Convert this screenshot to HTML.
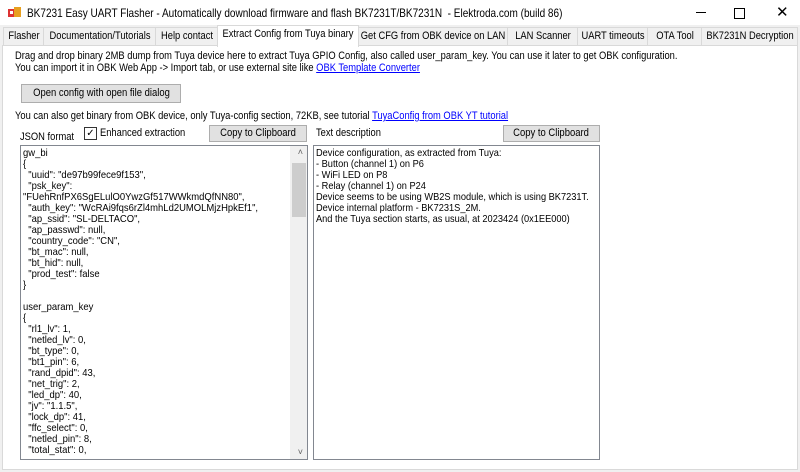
<!DOCTYPE html><html><head><style>
body{margin:0;width:800px;height:472px;background:#f0f0f0;font-family:"Liberation Sans",sans-serif;font-size:11px;color:#000;position:relative;overflow:hidden}
.a{position:absolute;white-space:nowrap}
.s{transform:scaleX(.85);transform-origin:0 0}
.title{top:0;left:0;width:800px;height:25px;background:#fff}
.tab{position:absolute;top:27px;height:17px;border:1px solid #d9d9d9;border-bottom:none;background:#f0f0f0;font-size:11px;white-space:nowrap;overflow:hidden}
.tab span{position:absolute;left:50%;top:2px;transform:translateX(-50%) scaleX(.85)}
.page{position:absolute;left:2px;top:45px;width:794px;height:423px;background:#fff;border:1px solid #d9d9d9}
.btn{position:absolute;background:#e1e1e1;border:1px solid #adadad;text-align:center;font-size:11px;box-sizing:border-box;white-space:nowrap}
.btn span{display:inline-block;transform:scaleX(.86)}
.box{position:absolute;border:1px solid #828790;background:#fff;box-sizing:border-box;overflow:hidden}
.txt{position:absolute;left:2px;top:2px;line-height:11px;font-size:10.5px;white-space:pre;transform:scaleX(.9);transform-origin:0 0}
a{color:#0000ff;text-decoration:underline}
</style></head><body>
<div class="a title"></div>
<svg class="a" style="left:8px;top:6px" width="14" height="12"><rect x="0" y="3" width="6" height="8" fill="#d33"/><rect x="6" y="1" width="7" height="10" fill="#e8a020"/><rect x="2" y="5" width="3" height="3" fill="#fff"/></svg>
<div class="a s" style="left:27px;top:6px;font-size:12px;transform:scaleX(.835)">BK7231 Easy UART Flasher - Automatically download firmware and flash BK7231T/BK7231N&nbsp; - Elektroda.com (build 86)</div>
<div class="a" style="left:696px;top:12px;width:10px;height:1px;background:#000"></div>
<div class="a" style="left:734px;top:8px;width:9px;height:9px;border:1px solid #000"></div>
<div class="a" style="left:776px;top:3px;font-size:15px">✕</div>
<div class="page"></div>
<div class="tab" style="left:3px;width:40px"><span>Flasher</span></div>
<div class="tab" style="left:43px;width:111px"><span>Documentation/Tutorials</span></div>
<div class="tab" style="left:155px;width:61px"><span>Help contact</span></div>
<div class="tab" style="left:217px;top:25px;height:21px;width:140px;background:#fff;z-index:2"><span style="top:2px">Extract Config from Tuya binary</span></div>
<div class="tab" style="left:358px;width:148px"><span>Get CFG from OBK device on LAN</span></div>
<div class="tab" style="left:507px;width:69px"><span>LAN Scanner</span></div>
<div class="tab" style="left:577px;width:69px"><span>UART timeouts</span></div>
<div class="tab" style="left:647px;width:53px"><span>OTA Tool</span></div>
<div class="tab" style="left:701px;width:95px"><span>BK7231N Decryption</span></div>
<div class="a s" style="left:15px;top:50px">Drag and drop binary 2MB dump from Tuya device here to extract Tuya GPIO Config, also called user_param_key. You can use it later to get OBK configuration.</div>
<div class="a s" style="left:15px;top:62px">You can import it in OBK Web App -&gt; Import tab, or use external site like <a>OBK Template Converter</a></div>
<div class="btn" style="left:21px;top:84px;width:160px;height:19px;line-height:17px"><span>Open config with open file dialog</span></div>
<div class="a s" style="left:15px;top:110px">You can also get binary from OBK device, only Tuya-config section, 72KB, see tutorial <a>TuyaConfig from OBK YT tutorial</a></div>
<div class="a s" style="left:20px;top:131px">JSON format</div>
<div class="a" style="left:84px;top:127px;width:11px;height:11px;border:1px solid #333;background:#fff;font-size:10px;line-height:11px;text-align:center">✓</div>
<div class="a s" style="left:100px;top:127px">Enhanced extraction</div>
<div class="btn" style="left:209px;top:125px;width:98px;height:17px;line-height:15px"><span>Copy to Clipboard</span></div>
<div class="a s" style="left:316px;top:127px">Text description</div>
<div class="btn" style="left:503px;top:125px;width:97px;height:17px;line-height:15px"><span>Copy to Clipboard</span></div>
<div class="box" style="left:20px;top:145px;width:288px;height:315px">
<div class="txt">gw_bi
{
  "uuid": "de97b99fece9f153",
  "psk_key":
"FUehRnfPX6SgELulO0YwzGf517WWkmdQfNN80",
  "auth_key": "WcRAi9fqs6rZl4mhLd2UMOLMjzHpkEf1",
  "ap_ssid": "SL-DELTACO",
  "ap_passwd": null,
  "country_code": "CN",
  "bt_mac": null,
  "bt_hid": null,
  "prod_test": false
}

user_param_key
{
  "rl1_lv": 1,
  "netled_lv": 0,
  "bt_type": 0,
  "bt1_pin": 6,
  "rand_dpid": 43,
  "net_trig": 2,
  "led_dp": 40,
  "jv": "1.1.5",
  "lock_dp": 41,
  "ffc_select": 0,
  "netled_pin": 8,
  "total_stat": 0,</div>
<div class="a" style="right:0;top:0;width:17px;height:313px;background:#f0f0f0"></div>
<div class="a" style="right:1px;top:17px;width:14px;height:54px;background:#cdcdcd"></div>
<div class="a" style="right:4px;top:1px;font-size:9px;color:#606060">˄</div>
<div class="a" style="right:4px;bottom:2px;font-size:9px;color:#606060">˅</div>
</div>
<div class="box" style="left:313px;top:145px;width:287px;height:315px">
<div class="txt" style="transform:scaleX(.88)">Device configuration, as extracted from Tuya:
- Button (channel 1) on P6
- WiFi LED on P8
- Relay (channel 1) on P24
Device seems to be using WB2S module, which is using BK7231T.
Device internal platform - BK7231S_2M.
And the Tuya section starts, as usual, at 2023424 (0x1EE000)</div>
</div>
</body></html>
